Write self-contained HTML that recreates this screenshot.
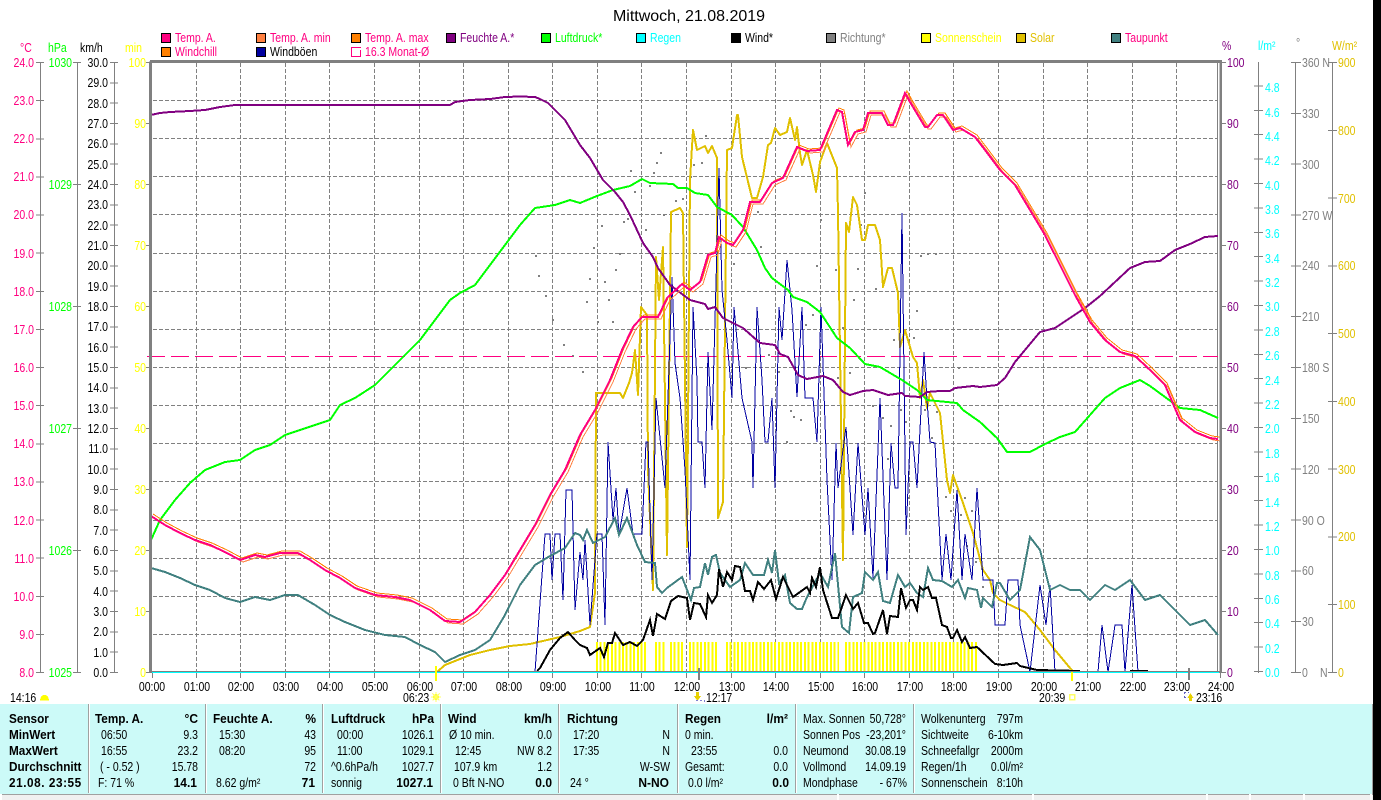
<!DOCTYPE html>
<html lang="de"><head><meta charset="utf-8"><title>Mittwoch, 21.08.2019</title>
<style>
html,body{margin:0;padding:0;background:#fff;width:1381px;height:800px;overflow:hidden}
#p{position:relative;width:1381px;height:800px;overflow:hidden;font:12.5px/15px "Liberation Sans",sans-serif;color:#000}
#p span{position:absolute;white-space:pre;margin-top:1px}
.l{transform:scaleX(.84);transform-origin:0 0}
.r{transform:translateX(-100%) scaleX(.84);transform-origin:100% 0}
.c{transform:translateX(-50%) scaleX(.84);transform-origin:50% 0}
#p b{font-weight:bold}
#p span.bl{transform:scaleX(.94);transform-origin:0 0;font-weight:bold}
#p span.br{transform:translateX(-100%) scaleX(.96);transform-origin:100% 0;font-weight:bold}
svg{position:absolute;left:0;top:0}
#panel{position:absolute;left:0;top:704px;width:1372px;height:90px;background:#ccfaf8;border-right:1px solid #a0a0a0}
#status{position:absolute;left:0;top:794px;width:1373px;height:6px;background:#f0f0f0;border-top:1px solid #a0a0a0;box-sizing:border-box}
.d{position:absolute;top:704px;height:89px;width:1px;background:#a0a0a0;border-right:1px solid #fff}
.sb{position:absolute;top:794px;height:6px;width:2px;background:#fff}
#blk{position:absolute;left:1373px;top:0;width:8px;height:800px;background:#000}
</style></head><body><div id="p">
<svg width="1381" height="800" viewBox="0 0 1381 800" shape-rendering="crispEdges" fill="none">
<!-- grid -->
<path stroke="#808080" stroke-dasharray="4 2" d="M196.5 63V672M240.5 63V672M285.5 63V672M329.5 63V672M374.5 63V672M419.5 63V672M463.5 63V672M508.5 63V672M552.5 63V672M597.5 63V672M641.5 63V672M686.5 63V672M731.5 63V672M775.5 63V672M820.5 63V672M864.5 63V672M909.5 63V672M953.5 63V672M998.5 63V672M1043.5 63V672M1087.5 63V672M1132.5 63V672M1176.5 63V672"/>
<path stroke="#808080" stroke-dasharray="4 2" d="M153 100.5H1217M153 138.5H1217M153 176.5H1217M153 214.5H1217M153 253.5H1217M153 291.5H1217M153 329.5H1217M153 367.5H1217M153 405.5H1217M153 443.5H1217M153 481.5H1217M153 520.5H1217M153 558.5H1217M153 596.5H1217M153 634.5H1217"/>
<!-- hour ticks -->
<path stroke="#808080" d="M152.5 672V678M196.5 672V678M240.5 672V678M285.5 672V678M329.5 672V678M374.5 672V678M419.5 672V678M463.5 672V678M508.5 672V678M552.5 672V678M597.5 672V678M641.5 672V678M686.5 672V678M731.5 672V678M775.5 672V678M820.5 672V678M864.5 672V678M909.5 672V678M953.5 672V678M998.5 672V678M1043.5 672V678M1087.5 672V678M1132.5 672V678M1176.5 672V678M1220.5 672V678"/>
<!-- left axes -->
<path stroke="#808080" d="M40.5 62V673M77.5 62V673M114.5 62V673M1258.5 62V673M1295.5 62V673M1332.5 62V673M1217.5 62V672"/>
<path stroke="#808080" stroke-width="8" stroke-dasharray="1 37.125" d="M40 62V673"/>
<path stroke="#808080" stroke-width="8" stroke-dasharray="1 121" d="M77 62V673"/>
<path stroke="#808080" stroke-width="8" stroke-dasharray="1 19.333" d="M114 62V673"/>
<path stroke="#808080" stroke-width="5" stroke-dasharray="1 60" d="M148.5 62V673"/>
<path stroke="#808080" stroke-width="5" stroke-dasharray="1 60" d="M1223.5 62V673"/>
<path stroke="#808080" stroke-width="9" stroke-dasharray="1 23.4" d="M1258.5 672V80"/>
<path stroke="#808080" stroke-width="10" stroke-dasharray="1 49.833" d="M1296 62V673"/>
<path stroke="#808080" stroke-width="9" stroke-dasharray="1 66.778" d="M1332.5 62V673"/>
<!-- direction dots -->
<path stroke="#808080" stroke-width="2" d="M705 136h2M660 153h2M656 163h2M653 173h2M630 171h2M693 165h2M701 163h2M690 177h2M649 186h2M634 192h2M675 201h2M682 199h2M663 215h2M623 222h2M601 226h2M627 219h2M645 230h2M593 248h2M619 254h2M615 270h2M589 279h2M604 282h2M586 302h2M608 300h2M597 322h2M612 322h2M760 247h2M757 212h2M816 266h2M835 270h2M857 269h2M875 289h2M853 300h2M812 315h2M805 325h2M842 328h2M893 340h2M913 338h2M916 311h2M920 256h2M927 254h2M935 254h2M864 193h2M860 225h2M820 220h2M733 264h2M582 372h2M745 368h2M768 355h2M778 372h2M849 373h2M958 368h2M790 411h2M793 417h2M786 442h2M800 420h2M837 378h2M872 406h2M882 418h2M890 426h2M900 410h2M905 422h2M887 459h2M908 498h2M931 438h2M941 432h2M945 497h2M950 511h2M960 515h2M964 498h2M971 511h2M966 546h2M975 562h2M981 569h2M982 587h2M924 410h2M936 412h2M535 256h2M538 276h2M545 296h2M552 320h2M563 345h2M572 356h2"/>
<!-- monthly average -->
<path stroke="#ff0080" stroke-dasharray="18 6" d="M147 356.5H1218"/>
<!-- sunshine -->
<g stroke="#ffff00" stroke-width="30" stroke-dasharray="2 1.71">
<path d="M596 657H646"/><path d="M655 657H665"/><path d="M670 657H683"/><path d="M689 657H717"/><path d="M726 657H839"/><path d="M845 657H978"/>
</g>
<!-- solar -->
<polyline stroke="#e0c000" stroke-width="2" stroke-linejoin="round" points="437,672 445,665 470,655 490,650 510,646 530,644 560,637 580,631 590,627 595,593 596,393 620,393 623,398 629,383 632,373 635,350 638,395 641,307 647,315 648,470 653,590 656,257 659,300 663,247 667,555 671,212 680,208 683,213 687,547 690,180 693,130 697,150 705,146 708,153 712,146 717,158 718,518 723,502 727,150 732,148 737,115 738,115 742,157 752,198 757,198 763,177 768,145 771,143 775,128 780,135 787,132 790,118 795,140 797,127 800,153 802,165 807,150 813,175 816,192 820,162 827,143 837,168 838,213 843,560 846,223 849,232 853,197 857,205 862,240 865,240 868,225 875,225 880,240 883,287 888,268 892,268 898,293 900,347 905,330 913,357 917,363 920,398 923,380 927,408 930,393 935,403 940,413 947,480 950,493 953,475 963,503 973,533 983,570 990,580 993,593 1000,600 1010,605 1025,612 1040,630 1055,650 1070,668 1074,672"/>
<!-- gusts -->
<polyline stroke="#0000a0" stroke-width="1" points="535,672 545,534 550,534 552,580 555,534 560,534 563,600 566,490 572,490 575,610 580,552 583,580 585,540 590,625 597,534 602,534 605,625 608,442 613,520 616,488 619,535 627,488 633,534 642,534 646,442 648,442 652,580 656,398 665,488 672,277 675,363 680,398 685,470 690,580 693,307 697,380 698,442 702,442 705,488 708,352 712,430 716,283 719,168 722,290 727,340 732,398 734,307 737,340 742,398 752,442 753,488 757,307 762,380 765,442 768,442 772,398 775,488 779,307 782,340 787,260 792,310 797,397 802,307 805,398 813,398 817,442 821,307 827,480 832,580 836,443 838,488 846,427 853,535 858,443 865,535 868,488 873,578 880,398 887,580 891,443 895,488 898,488 902,213 906,535 910,442 913,442 917,488 924,352 927,400 930,442 935,443 942,580 946,534 951,580 957,490 962,580 965,534 972,580 977,488 983,580 993,580 995,625 1005,625 1008,580 1018,580 1020,625 1030,672 1040,585 1046,625 1050,585 1055,672 1098,672 1102,625 1108,672 1115,625 1122,625 1125,672 1132,585 1138,672 1148,672"/>
<!-- dew point -->
<polyline stroke="#408080" stroke-width="2" points="151,568 165,572 180,578 195,585 210,590 225,598 240,602 255,597 270,600 285,595 298,595 315,605 330,615 345,622 365,630 385,635 405,637 420,645 435,652 445,662 460,655 475,650 490,640 505,615 520,585 535,565 550,556 565,548 575,533 580,535 583,540 587,530 593,543 605,537 615,518 619,535 627,518 637,545 645,562 655,563 657,587 662,593 667,588 682,577 691,600 694,588 700,587 705,563 708,575 712,557 716,555 720,573 730,587 740,580 745,563 753,575 764,575 768,560 772,573 775,550 779,583 785,575 790,603 797,609 802,609 807,597 820,573 828,587 835,553 842,627 849,633 853,597 862,593 865,572 873,580 878,572 883,601 890,603 898,575 905,587 910,583 917,593 923,597 928,568 933,580 942,581 952,587 958,580 965,598 968,588 977,590 981,608 983,598 992,607 997,583 1000,583 1010,600 1020,590 1030,537 1040,550 1050,590 1060,585 1070,590 1080,590 1090,600 1105,585 1115,590 1130,580 1145,600 1160,595 1175,610 1190,625 1205,620 1218,635"/>
<!-- wind -->
<polyline stroke="#000" stroke-width="2" points="537,671 540,668 550,650 560,638 568,632 575,640 580,645 587,648 590,655 600,648 604,657 608,643 612,643 615,633 623,645 630,642 637,646 643,640 650,620 653,636 657,614 665,619 671,601 678,596 687,598 690,620 694,603 700,604 706,617 708,595 712,603 717,595 719,569 723,587 727,572 732,580 735,566 740,567 743,580 745,591 750,591 753,600 758,582 764,589 771,580 776,599 783,577 793,597 807,587 810,593 812,578 816,587 820,567 823,590 832,618 838,618 846,595 853,609 858,603 864,623 868,623 873,634 875,633 883,610 887,634 890,616 898,617 901,588 906,608 910,600 913,600 917,610 920,587 923,590 928,587 932,598 936,598 942,625 947,627 951,638 953,638 957,630 962,642 965,637 970,648 977,647 995,664 1003,665 1017,663 1020,666 1037,670 1080,671"/>
<path stroke="#000" stroke-width="2" d="M1130 671H1148"/>
<!-- pressure -->
<polyline stroke="#00ff00" stroke-width="2" points="151,540 160,520 175,500 190,483 205,470 225,462 240,460 255,450 270,445 285,435 300,430 315,425 330,420 340,405 355,398 375,385 390,370 405,355 420,340 435,320 450,300 460,293 475,285 490,265 505,245 520,225 535,208 555,205 570,200 580,203 597,196 613,190 630,186 642,179 650,183 673,184 678,188 687,188 695,193 708,195 717,207 732,215 743,227 757,250 765,268 772,278 788,290 793,297 807,302 820,312 837,338 850,348 865,364 880,367 902,380 917,390 927,400 957,403 963,410 980,422 997,438 1007,452 1030,452 1045,444 1060,437 1075,432 1090,415 1105,398 1120,388 1140,380 1150,386 1165,397 1180,408 1200,410 1218,418"/>
<!-- humidity -->
<polyline stroke="#800080" stroke-width="2" points="151,115 160,113 170,112 190,111 205,110 220,107 235,105 450,105 455,102 470,100 490,99 505,97 520,96.5 535,97 540,99 548,103 555,110 565,120 580,145 590,158 603,180 615,192 623,202 630,215 643,243 653,257 658,268 670,285 690,300 705,304 708,309 715,307 723,318 743,328 760,343 775,345 780,354 788,357 798,375 807,379 823,376 833,380 843,392 850,395 863,391 873,390 888,395 902,393 905,396 920,397 927,392 940,391 950,391 955,388 973,386 980,387 997,385 1005,378 1015,362 1025,350 1040,332 1055,328 1070,318 1085,308 1100,296 1115,282 1130,268 1145,262 1160,261 1175,250 1190,244 1205,237 1218,236"/>
<!-- temp -->
<defs><polyline id="T" points="151,516 165,525 180,533 195,540 210,545 225,552 240,560 255,555 265,557 280,553 298,553 310,560 325,570 340,578 355,588 375,595 395,597 410,600 430,610 445,621 460,622 475,612 490,595 505,575 520,550 535,525 550,495 565,470 580,435 595,410 610,380 622,350 633,327 642,317 658,317 667,298 682,284 690,290 700,282 708,255 715,253 719,237 727,243 733,245 743,230 750,202 760,202 772,183 783,178 797,147 807,151 820,150 837,110 842,112 848,145 855,132 863,130 868,113 882,113 888,125 893,125 905,93 910,102 925,127 928,127 937,115 943,115 953,130 960,128 975,137 985,150 1000,170 1015,185 1030,210 1045,235 1060,265 1075,295 1090,322 1105,340 1120,352 1135,356 1150,370 1165,385 1180,420 1195,432 1210,438 1218,439"/></defs>
<use href="#T" stroke="#ff8040" transform="translate(3,2)"/>
<use href="#T" stroke="#ff8000" transform="translate(2,-2)"/>
<use href="#T" stroke="#ff0080" stroke-width="2"/>
<!-- frame -->
<path stroke="#808080" stroke-width="3" d="M150.5 61.5V673"/>
<path stroke="#808080" stroke-width="3" d="M150 61.5H1222"/>
<path stroke="#808080" stroke-width="2.5" d="M1220.5 61V673"/>
<path stroke="#808080" stroke-width="2" d="M151 672H1220"/>
<path stroke="#00ffff" stroke-width="1" d="M152 672.5H1219"/>
<!-- legend boxes -->
<g stroke="#000" stroke-width="1">
<rect x="161.500" y="33.500" width="9" height="9" fill="#ff0080"/><rect x="256.500" y="33.500" width="9" height="9" fill="#ff8040"/><rect x="351.500" y="33.500" width="9" height="9" fill="#ff8000"/><rect x="446.500" y="33.500" width="9" height="9" fill="#800080"/><rect x="541.500" y="33.500" width="9" height="9" fill="#00ff00"/><rect x="636.500" y="33.500" width="9" height="9" fill="#00ffff"/><rect x="731.500" y="33.500" width="9" height="9" fill="#000"/><rect x="826.500" y="33.500" width="9" height="9" fill="#808080"/><rect x="921.500" y="33.500" width="9" height="9" fill="#ffff00"/><rect x="1016.500" y="33.500" width="9" height="9" fill="#e0c000"/><rect x="1111.500" y="33.500" width="9" height="9" fill="#408080"/>
<rect x="161.500" y="47.500" width="9" height="9" fill="#ff8000"/><rect x="256.500" y="47.500" width="9" height="9" fill="#0000a0"/>
</g>
<path stroke="#ff0080" d="M361 47.500H351.500V56.500H360.500V50"/>
<!-- markers -->
<path stroke="#ffff00" stroke-width="2" d="M436 666V681M1072 672V681"/>
<path stroke="#808080" stroke-width="2" d="M699 668V680M1189 668V680"/>
<path fill="#ffff00" d="M40 700.500a4.500 5.500 0 0 1 9 0z"/>
<circle cx="436" cy="697" r="3" fill="#ffff00"/>
<path stroke="#ffff66" d="M436 692V702M431 697H441M432.500 693.500L439.500 700.500M439.500 693.500L432.500 700.500"/>
<rect x="1069.500" y="694.500" width="5" height="5" stroke="#ffff66" stroke-width="1.500"/>
<path fill="#e8d000" d="M696 692h3v4h2l-3.500 5l-3.500-5h2z"/>
<path stroke="#8080d0" stroke-dasharray="2 2" d="M696 700.500H705M704.500 700V703"/>
<path fill="#e8d000" d="M1189 701h3v-3h1.500l-3-5l-3 5h1.500z"/>
<path stroke="#6060c0" stroke-dasharray="2 2" d="M1184 692.500H1189M1184.500 692V698M1184 697.500H1188"/>
</svg>

<span style="left:689px;top:6px;transform:translateX(-50%);font-size:16px;line-height:19px">Mittwoch, 21.08.2019</span>

<!-- legend -->
<div style="color:#ff0080">
<span class="l" style="left:175px;top:30px">Temp. A.</span><span class="l" style="left:270px;top:30px">Temp. A. min</span><span class="l" style="left:365px;top:30px">Temp. A. max</span><span class="l" style="left:175px;top:44px">Windchill</span><span class="l" style="left:365px;top:44px">16.3 Monat-Ø</span><span class="l" style="left:1125px;top:30px">Taupunkt</span>
</div>
<span class="l" style="left:460px;top:30px;color:#800080">Feuchte A.*</span>
<span class="l" style="left:555px;top:30px;color:#00ff00">Luftdruck*</span>
<span class="l" style="left:650px;top:30px;color:#00ffff">Regen</span>
<span class="l" style="left:745px;top:30px">Wind*</span>
<span class="l" style="left:840px;top:30px;color:#808080">Richtung*</span>
<span class="l" style="left:935px;top:30px;color:#ffff00">Sonnenschein</span>
<span class="l" style="left:1030px;top:30px;color:#e0c000">Solar</span>
<span class="l" style="left:270px;top:44px">Windböen</span>

<!-- axis headers -->
<span class="l" style="left:20px;top:40px;color:#ff0080">°C</span>
<span class="l" style="left:48px;top:40px;color:#00ff00">hPa</span>
<span class="l" style="left:80px;top:40px">km/h</span>
<span class="l" style="left:125px;top:40px;color:#ffff00">min</span>
<span class="l" style="left:1222px;top:38px;color:#800080">%</span>
<span class="l" style="left:1258px;top:38px;color:#00ffff">l/m²</span>
<span class="l" style="left:1296px;top:35px;color:#808080">°</span>
<span class="l" style="left:1332px;top:38px;color:#e0c000">W/m²</span>

<!-- temp axis -->
<div style="color:#ff0080">
<span class="r" style="left:34px;top:55px">24.0</span><span class="r" style="left:34px;top:93px">23.0</span><span class="r" style="left:34px;top:131px">22.0</span><span class="r" style="left:34px;top:169px">21.0</span><span class="r" style="left:34px;top:207px">20.0</span><span class="r" style="left:34px;top:246px">19.0</span><span class="r" style="left:34px;top:284px">18.0</span><span class="r" style="left:34px;top:322px">17.0</span><span class="r" style="left:34px;top:360px">16.0</span><span class="r" style="left:34px;top:398px">15.0</span><span class="r" style="left:34px;top:436px">14.0</span><span class="r" style="left:34px;top:474px">13.0</span><span class="r" style="left:34px;top:513px">12.0</span><span class="r" style="left:34px;top:551px">11.0</span><span class="r" style="left:34px;top:589px">10.0</span><span class="r" style="left:34px;top:627px">9.0</span><span class="r" style="left:34px;top:665px">8.0</span>
</div>
<!-- hPa axis -->
<div style="color:#00ff00">
<span class="r" style="left:72px;top:55px">1030</span><span class="r" style="left:72px;top:177px">1029</span><span class="r" style="left:72px;top:299px">1028</span><span class="r" style="left:72px;top:421px">1027</span><span class="r" style="left:72px;top:543px">1026</span><span class="r" style="left:72px;top:665px">1025</span>
</div>
<!-- km/h axis -->
<div>
<span class="r" style="left:108px;top:55px">30.0</span><span class="r" style="left:108px;top:75px">29.0</span><span class="r" style="left:108px;top:96px">28.0</span><span class="r" style="left:108px;top:116px">27.0</span><span class="r" style="left:108px;top:136px">26.0</span><span class="r" style="left:108px;top:157px">25.0</span><span class="r" style="left:108px;top:177px">24.0</span><span class="r" style="left:108px;top:197px">23.0</span><span class="r" style="left:108px;top:218px">22.0</span><span class="r" style="left:108px;top:238px">21.0</span><span class="r" style="left:108px;top:258px">20.0</span><span class="r" style="left:108px;top:279px">19.0</span><span class="r" style="left:108px;top:299px">18.0</span><span class="r" style="left:108px;top:319px">17.0</span><span class="r" style="left:108px;top:340px">16.0</span><span class="r" style="left:108px;top:360px">15.0</span><span class="r" style="left:108px;top:380px">14.0</span><span class="r" style="left:108px;top:401px">13.0</span><span class="r" style="left:108px;top:421px">12.0</span><span class="r" style="left:108px;top:441px">11.0</span><span class="r" style="left:108px;top:462px">10.0</span><span class="r" style="left:108px;top:482px">9.0</span><span class="r" style="left:108px;top:502px">8.0</span><span class="r" style="left:108px;top:523px">7.0</span><span class="r" style="left:108px;top:543px">6.0</span><span class="r" style="left:108px;top:563px">5.0</span><span class="r" style="left:108px;top:584px">4.0</span><span class="r" style="left:108px;top:604px">3.0</span><span class="r" style="left:108px;top:624px">2.0</span><span class="r" style="left:108px;top:645px">1.0</span><span class="r" style="left:108px;top:665px">0.0</span>
</div>
<!-- min axis -->
<div style="color:#ffff00">
<span class="r" style="left:146px;top:55px">100</span><span class="r" style="left:146px;top:116px">90</span><span class="r" style="left:146px;top:177px">80</span><span class="r" style="left:146px;top:238px">70</span><span class="r" style="left:146px;top:299px">60</span><span class="r" style="left:146px;top:360px">50</span><span class="r" style="left:146px;top:421px">40</span><span class="r" style="left:146px;top:482px">30</span><span class="r" style="left:146px;top:543px">20</span><span class="r" style="left:146px;top:604px">10</span><span class="r" style="left:146px;top:665px">0</span>
</div>
<!-- % axis -->
<div style="color:#800080">
<span class="l" style="left:1227px;top:55px">100</span><span class="l" style="left:1227px;top:116px">90</span><span class="l" style="left:1227px;top:177px">80</span><span class="l" style="left:1227px;top:238px">70</span><span class="l" style="left:1227px;top:299px">60</span><span class="l" style="left:1227px;top:360px">50</span><span class="l" style="left:1227px;top:421px">40</span><span class="l" style="left:1227px;top:482px">30</span><span class="l" style="left:1227px;top:543px">20</span><span class="l" style="left:1227px;top:604px">10</span><span class="l" style="left:1227px;top:665px">0</span>
</div>
<!-- l/m2 axis -->
<div style="color:#00ffff">
<span class="l" style="left:1265px;top:80px">4.8</span><span class="l" style="left:1265px;top:105px">4.6</span><span class="l" style="left:1265px;top:129px">4.4</span><span class="l" style="left:1265px;top:153px">4.2</span><span class="l" style="left:1265px;top:178px">4.0</span><span class="l" style="left:1265px;top:202px">3.8</span><span class="l" style="left:1265px;top:226px">3.6</span><span class="l" style="left:1265px;top:251px">3.4</span><span class="l" style="left:1265px;top:275px">3.2</span><span class="l" style="left:1265px;top:299px">3.0</span><span class="l" style="left:1265px;top:324px">2.8</span><span class="l" style="left:1265px;top:348px">2.6</span><span class="l" style="left:1265px;top:373px">2.4</span><span class="l" style="left:1265px;top:397px">2.2</span><span class="l" style="left:1265px;top:421px">2.0</span><span class="l" style="left:1265px;top:446px">1.8</span><span class="l" style="left:1265px;top:470px">1.6</span><span class="l" style="left:1265px;top:495px">1.4</span><span class="l" style="left:1265px;top:519px">1.2</span><span class="l" style="left:1265px;top:543px">1.0</span><span class="l" style="left:1265px;top:568px">0.8</span><span class="l" style="left:1265px;top:592px">0.6</span><span class="l" style="left:1265px;top:616px">0.4</span><span class="l" style="left:1265px;top:641px">0.2</span><span class="l" style="left:1265px;top:665px">0.0</span>
</div>
<!-- direction axis -->
<div style="color:#808080">
<span class="l" style="left:1302px;top:55px">360 N</span><span class="l" style="left:1302px;top:106px">330</span><span class="l" style="left:1302px;top:157px">300</span><span class="l" style="left:1302px;top:208px">270 W</span><span class="l" style="left:1302px;top:258px">240</span><span class="l" style="left:1302px;top:309px">210</span><span class="l" style="left:1302px;top:360px">180 S</span><span class="l" style="left:1302px;top:411px">150</span><span class="l" style="left:1302px;top:462px">120</span><span class="l" style="left:1302px;top:513px">90 O</span><span class="l" style="left:1302px;top:563px">60</span><span class="l" style="left:1302px;top:614px">30</span><span class="l" style="left:1302px;top:665px">0</span><span class="l" style="left:1320px;top:665px">N</span>
</div>
<!-- W/m2 axis -->
<div style="color:#e0c000">
<span class="l" style="left:1338px;top:55px">900</span><span class="l" style="left:1338px;top:123px">800</span><span class="l" style="left:1338px;top:191px">700</span><span class="l" style="left:1338px;top:258px">600</span><span class="l" style="left:1338px;top:326px">500</span><span class="l" style="left:1338px;top:394px">400</span><span class="l" style="left:1338px;top:462px">300</span><span class="l" style="left:1338px;top:529px">200</span><span class="l" style="left:1338px;top:597px">100</span><span class="l" style="left:1338px;top:665px">0</span>
</div>
<!-- hours -->
<div>
<span class="c" style="left:152px;top:679px">00:00</span><span class="c" style="left:197px;top:679px">01:00</span><span class="c" style="left:241px;top:679px">02:00</span><span class="c" style="left:286px;top:679px">03:00</span><span class="c" style="left:330px;top:679px">04:00</span><span class="c" style="left:375px;top:679px">05:00</span><span class="c" style="left:420px;top:679px">06:00</span><span class="c" style="left:464px;top:679px">07:00</span><span class="c" style="left:509px;top:679px">08:00</span><span class="c" style="left:553px;top:679px">09:00</span><span class="c" style="left:598px;top:679px">10:00</span><span class="c" style="left:642px;top:679px">11:00</span><span class="c" style="left:687px;top:679px">12:00</span><span class="c" style="left:732px;top:679px">13:00</span><span class="c" style="left:776px;top:679px">14:00</span><span class="c" style="left:821px;top:679px">15:00</span><span class="c" style="left:865px;top:679px">16:00</span><span class="c" style="left:910px;top:679px">17:00</span><span class="c" style="left:954px;top:679px">18:00</span><span class="c" style="left:999px;top:679px">19:00</span><span class="c" style="left:1044px;top:679px">20:00</span><span class="c" style="left:1088px;top:679px">21:00</span><span class="c" style="left:1133px;top:679px">22:00</span><span class="c" style="left:1177px;top:679px">23:00</span><span class="c" style="left:1221px;top:679px">24:00</span>
<span class="l" style="left:10px;top:690px">14:16</span><span class="l" style="left:403px;top:690px">06:23</span><span class="l" style="left:706px;top:690px">12:17</span><span class="l" style="left:1039px;top:690px">20:39</span><span class="l" style="left:1196px;top:690px">23:16</span>
</div>

<!-- bottom panel -->
<div id="panel"></div>
<div class="d" style="left:88px"></div><div class="d" style="left:205px"></div><div class="d" style="left:322px"></div><div class="d" style="left:440px"></div><div class="d" style="left:558px"></div><div class="d" style="left:677px"></div><div class="d" style="left:795px"></div><div class="d" style="left:913px"></div>
<div id="status"></div>
<div class="sb" style="left:0"></div><div class="sb" style="left:837px"></div><div class="sb" style="left:1032px"></div><div class="sb" style="left:1206px"></div><div class="sb" style="left:1249px"></div><div class="sb" style="left:1303px"></div><div class="sb" style="left:1370px"></div>

<span class="bl" style="left:9px;top:711px">Sensor</span><span class="bl" style="left:9px;top:727px">MinWert</span><span class="bl" style="left:9px;top:743px">MaxWert</span><span class="bl" style="left:9px;top:759px">Durchschnitt</span><span class="bl" style="left:9px;top:775px;letter-spacing:.6px">21.08. 23:55</span>

<span class="bl" style="left:95px;top:711px">Temp. A.</span><span class="br" style="left:198px;top:711px">°C</span>
<span class="l" style="left:101px;top:727px">06:50</span><span class="r" style="left:198px;top:727px">9.3</span>
<span class="l" style="left:101px;top:743px">16:55</span><span class="r" style="left:198px;top:743px">23.2</span>
<span class="l" style="left:100px;top:759px">( - 0.52 )</span><span class="r" style="left:198px;top:759px">15.78</span>
<span class="l" style="left:98px;top:775px">F: 71 %</span><span class="br" style="left:197px;top:775px">14.1</span>

<span class="bl" style="left:213px;top:711px">Feuchte A.</span><span class="br" style="left:316px;top:711px">%</span>
<span class="l" style="left:219px;top:727px">15:30</span><span class="r" style="left:316px;top:727px">43</span>
<span class="l" style="left:219px;top:743px">08:20</span><span class="r" style="left:316px;top:743px">95</span>
<span class="r" style="left:316px;top:759px">72</span>
<span class="l" style="left:216px;top:775px">8.62 g/m²</span><span class="br" style="left:315px;top:775px">71</span>

<span class="bl" style="left:331px;top:711px">Luftdruck</span><span class="br" style="left:434px;top:711px">hPa</span>
<span class="l" style="left:337px;top:727px">00:00</span><span class="r" style="left:434px;top:727px">1026.1</span>
<span class="l" style="left:337px;top:743px">11:00</span><span class="r" style="left:434px;top:743px">1029.1</span>
<span class="l" style="left:331px;top:759px">^0.6hPa/h</span><span class="r" style="left:434px;top:759px">1027.7</span>
<span class="l" style="left:331px;top:775px">sonnig</span><span class="br" style="left:433px;top:775px">1027.1</span>

<span class="bl" style="left:448px;top:711px">Wind</span><span class="br" style="left:552px;top:711px">km/h</span>
<span class="l" style="left:449px;top:727px">Ø 10 min.</span><span class="r" style="left:552px;top:727px">0.0</span>
<span class="l" style="left:455px;top:743px">12:45</span><span class="r" style="left:552px;top:743px">NW 8.2</span>
<span class="l" style="left:454px;top:759px">107.9 km</span><span class="r" style="left:552px;top:759px">1.2</span>
<span class="l" style="left:453px;top:775px">0 Bft N-NO</span><span class="br" style="left:552px;top:775px">0.0</span>

<span class="bl" style="left:567px;top:711px">Richtung</span>
<span class="l" style="left:573px;top:727px">17:20</span><span class="r" style="left:670px;top:727px">N</span>
<span class="l" style="left:573px;top:743px">17:35</span><span class="r" style="left:670px;top:743px">N</span>
<span class="r" style="left:670px;top:759px">W-SW</span>
<span class="l" style="left:570px;top:775px">24 °</span><span class="br" style="left:669px;top:775px">N-NO</span>

<span class="bl" style="left:685px;top:711px">Regen</span><span class="br" style="left:788px;top:711px">l/m²</span>
<span class="l" style="left:685px;top:727px">0 min.</span>
<span class="l" style="left:691px;top:743px">23:55</span><span class="r" style="left:788px;top:743px">0.0</span>
<span class="l" style="left:685px;top:759px">Gesamt:</span><span class="r" style="left:788px;top:759px">0.0</span>
<span class="l" style="left:688px;top:775px">0.0 l/m²</span><span class="br" style="left:789px;top:775px">0.0</span>

<span class="l" style="left:803px;top:711px">Max. Sonnen</span><span class="r" style="left:906px;top:711px">50,728°</span>
<span class="l" style="left:803px;top:727px">Sonnen Pos</span><span class="r" style="left:906px;top:727px">-23,201°</span>
<span class="l" style="left:803px;top:743px">Neumond</span><span class="r" style="left:906px;top:743px">30.08.19</span>
<span class="l" style="left:803px;top:759px">Vollmond</span><span class="r" style="left:906px;top:759px">14.09.19</span>
<span class="l" style="left:803px;top:775px">Mondphase</span><span class="r" style="left:907px;top:775px">- 67%</span>

<span class="l" style="left:921px;top:711px">Wolkenunterg</span><span class="r" style="left:1023px;top:711px">797m</span>
<span class="l" style="left:921px;top:727px">Sichtweite</span><span class="r" style="left:1023px;top:727px">6-10km</span>
<span class="l" style="left:921px;top:743px">Schneefallgr</span><span class="r" style="left:1023px;top:743px">2000m</span>
<span class="l" style="left:921px;top:759px">Regen/1h</span><span class="r" style="left:1023px;top:759px">0.0l/m²</span>
<span class="l" style="left:921px;top:775px">Sonnenschein</span><span class="r" style="left:1023px;top:775px">8:10h</span>

<div id="blk"></div>
</div></body></html>
